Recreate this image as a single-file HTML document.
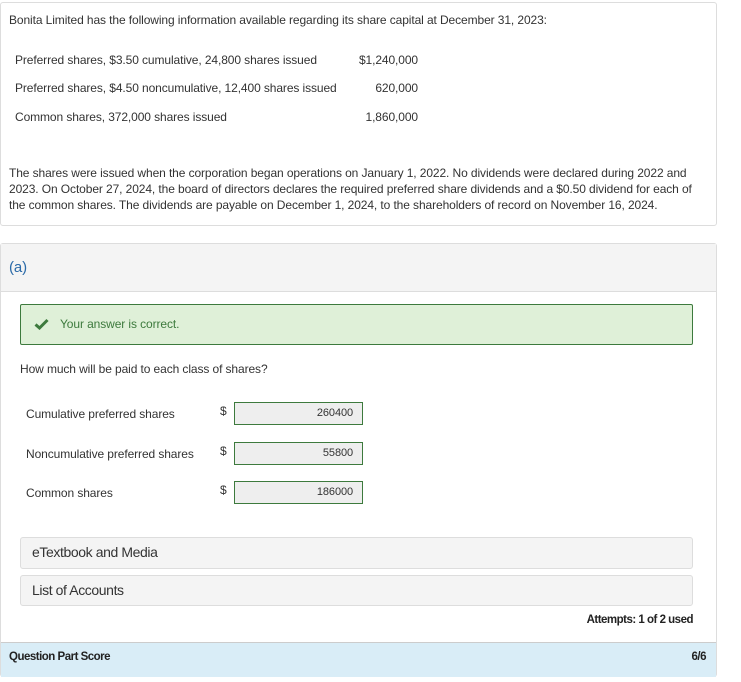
<!DOCTYPE html>
<html><head><meta charset="utf-8"><style>
*{margin:0;padding:0;box-sizing:border-box}
body{width:741px;height:682px;background:#fff;font-family:"Liberation Sans",sans-serif;color:#333;font-size:12px;position:relative;overflow:hidden;letter-spacing:-0.1px}
.a{position:absolute;white-space:nowrap}
.box{position:absolute;border:1px solid #ddd;border-radius:3px}
.inp{position:absolute;left:234px;width:129px;height:23px;border:1px solid #3d7a3d;background:#eee;text-align:right;padding-right:9px;line-height:21px;font-size:11px;color:#333}
.b{font-weight:bold;letter-spacing:-0.5px;font-size:11.5px;color:#222}
</style></head><body>
<div class="box" style="left:0;top:2px;width:717px;height:224px"></div>
<div class="a" style="left:9px;top:13px">Bonita Limited has the following information available regarding its share capital at December 31, 2023:</div>
<div class="a" style="left:15px;top:53px">Preferred shares, $3.50 cumulative, 24,800 shares issued</div>
<div class="a" style="left:15px;top:81px">Preferred shares, $4.50 noncumulative, 12,400 shares issued</div>
<div class="a" style="left:15px;top:110px">Common shares, 372,000 shares issued</div>
<div class="a" style="left:340px;width:78px;text-align:right;top:53px">$1,240,000</div>
<div class="a" style="left:340px;width:78px;text-align:right;top:81px">620,000</div>
<div class="a" style="left:340px;width:78px;text-align:right;top:110px">1,860,000</div>
<div class="a" style="left:9px;top:165px;line-height:16px;white-space:normal;width:692px">The shares were issued when the corporation began operations on January 1, 2022. No dividends were declared during 2022 and 2023. On October 27, 2024, the board of directors declares the required preferred share dividends and a $0.50 dividend for each of the common shares. The dividends are payable on December 1, 2024, to the shareholders of record on November 16, 2024.</div>

<div class="box" style="left:0;top:243px;width:717px;height:434px;border-radius:3px"></div>
<div class="a" style="left:1px;top:244px;width:715px;height:48px;background:#f4f4f4;border-bottom:1px solid #ddd"></div>
<div class="a" style="left:9px;top:259px;font-size:15px;color:#2a6aa8">(a)</div>

<div class="a" style="left:20px;top:304px;width:673px;height:41px;background:#dff0d8;border:1px solid #3d7a3d;border-radius:2px"></div>
<svg class="a" style="left:34px;top:318px" width="15" height="12" viewBox="0 0 15 12"><path d="M1.5 6.5 L5.5 10 L13.5 2" stroke="#3d7a3d" stroke-width="3" fill="none"/></svg>
<div class="a" style="left:60px;top:317px;color:#3d7a3d">Your answer is correct.</div>
<div class="a" style="left:20px;top:362px">How much will be paid to each class of shares?</div>

<div class="a" style="left:26px;top:407px">Cumulative preferred shares</div>
<div class="a" style="left:26px;top:447px">Noncumulative preferred shares</div>
<div class="a" style="left:26px;top:486px">Common shares</div>
<div class="a" style="left:220px;top:404px">$</div>
<div class="a" style="left:220px;top:444px">$</div>
<div class="a" style="left:220px;top:483px">$</div>
<div class="inp" style="top:402px">260400</div>
<div class="inp" style="top:442px">55800</div>
<div class="inp" style="top:481px">186000</div>

<div class="a" style="left:20px;top:537px;width:673px;height:32px;background:#f4f4f4;border:1px solid #ddd;border-radius:3px"></div>
<div class="a" style="left:32px;top:544px;font-size:14px;letter-spacing:-0.4px">eTextbook and Media</div>
<div class="a" style="left:20px;top:575px;width:673px;height:31px;background:#f4f4f4;border:1px solid #ddd;border-radius:3px"></div>
<div class="a" style="left:32px;top:582px;font-size:14px;letter-spacing:-0.4px">List of Accounts</div>
<div class="a b" style="left:500px;width:193px;text-align:right;top:614px">Attempts: 1 of 2 used</div>

<div class="a" style="left:1px;top:642px;width:715px;height:35px;background:#d9edf7;border-top:1px solid #ccc"></div>
<div class="a b" style="left:9px;top:651px">Question Part Score</div>
<div class="a b" style="left:640px;width:66px;text-align:right;top:651px">6/6</div>
</body></html>
